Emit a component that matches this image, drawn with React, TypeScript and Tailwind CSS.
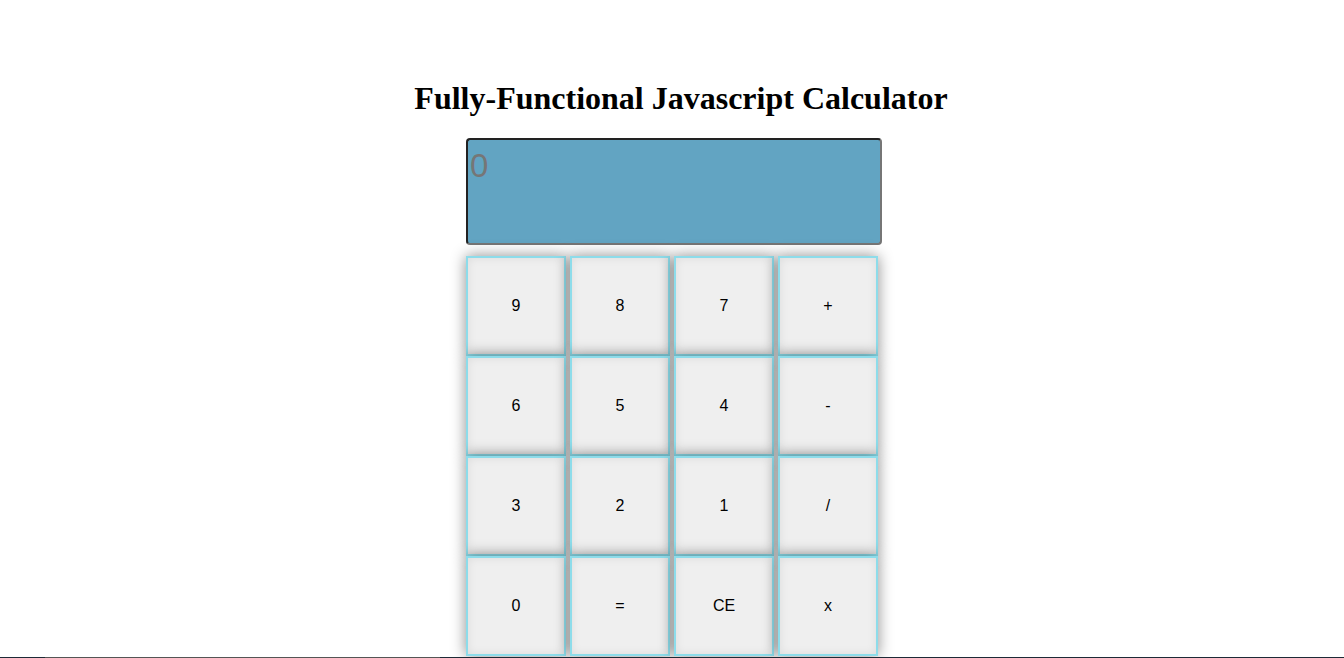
import React from "react";

const keys = ["9", "8", "7", "+", "6", "5", "4", "-", "3", "2", "1", "/", "0", "=", "CE", "x"];

export default function App() {
  return (
    <div className="w-[1344px] h-[658px] overflow-hidden bg-white flex flex-col">
      <div className="flex-1 flex flex-col items-center pt-[80px]">
        <h1
          className="text-[32px] font-bold leading-[37px] text-black mb-[21px] ml-[18px]"
          style={{ fontFamily: '"Liberation Serif", "Times New Roman", serif' }}
        >
          Fully-Functional Javascript Calculator
        </h1>
        <div className="w-[416px] flex flex-col ml-[4px]">
          <div
            className="h-[107px] w-[416px] bg-[#62a4c2] rounded-[4px] border-2 border-t-[#222222] border-l-[#222222] border-r-[#767676] border-b-[#767676] pl-[2px] pt-[7px] text-[33px] leading-[37px] text-[#767676]"
            style={{ fontFamily: '"Liberation Sans", Arial, sans-serif' }}
          >
            0
          </div>
          <div className="mt-[11px] grid grid-cols-[100px_100px_100px_100px] gap-x-[4px]">
            {keys.map((k) => (
              <button
                key={k}
                className="h-[100px] w-[100px] bg-[#efefef] border-2 border-[#8ddcea] text-[16px] text-black shadow-[0_0_14px_rgba(0,0,0,0.45),inset_0_0_10px_rgba(0,0,0,0.08)]"
                style={{ fontFamily: '"Liberation Sans", Arial, sans-serif' }}
              >
                {k}
              </button>
            ))}
          </div>
        </div>
      </div>
      <div className="h-px flex shrink-0">
        <div className="w-[45px] bg-[#1e2a36]" />
        <div className="w-[395px] bg-[#555555]" />
        <div className="flex-1 bg-[#1e2a36]" />
      </div>
    </div>
  );
}
